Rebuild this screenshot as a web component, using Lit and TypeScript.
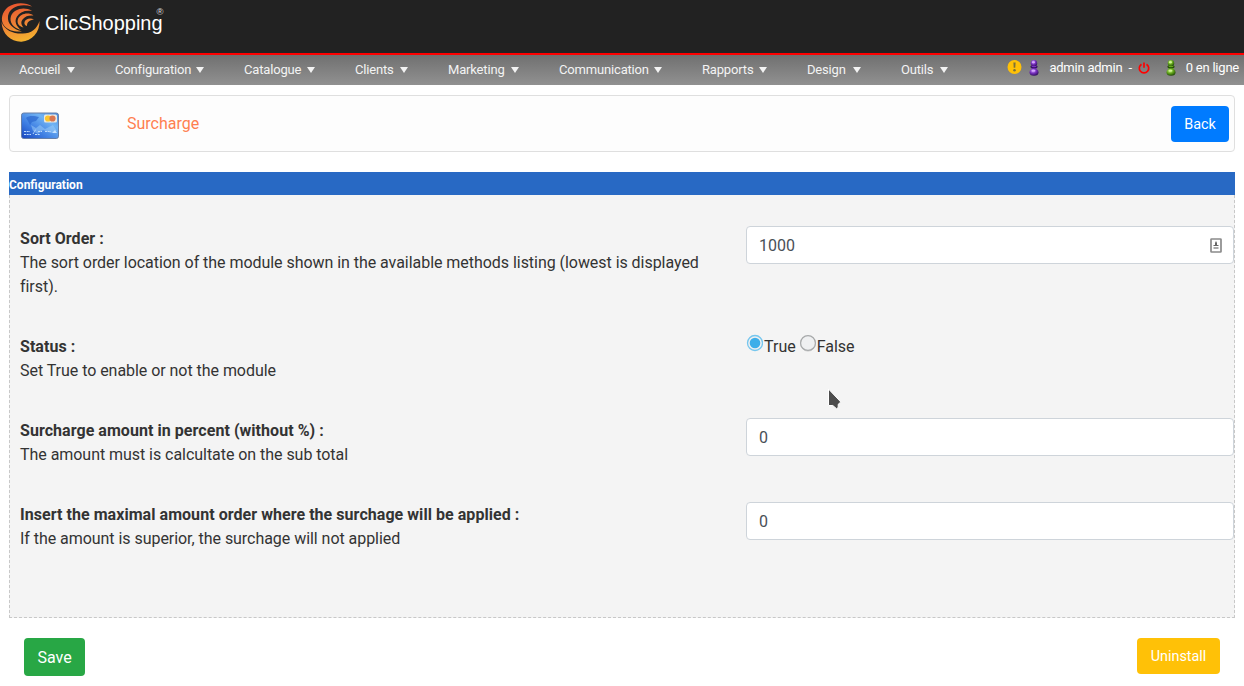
import { LitElement, html, css, svg } from "lit";
import { customElement } from "lit/decorators.js";

const MENU = ["Accueil", "Configuration", "Catalogue", "Clients", "Marketing", "Communication", "Rapports", "Design", "Outils"];

const person = (id: string, light: string, mid: string, dark: string) => html`
  <svg class="person" width="10" height="16" viewBox="0 0 10 16">
    <defs><radialGradient id=${id} cx="40%" cy="30%" r="70%">
      ${svg`<stop offset="0" stop-color=${light} /><stop offset=".5" stop-color=${mid} /><stop offset="1" stop-color=${dark} />`}
    </radialGradient></defs>
    <path d="M2.500 5.500h5v5h-5z" fill=${mid} />
    <ellipse cx="5" cy="12.200" rx="4.500" ry="3.500" fill="url(#${id})" />
    <ellipse cx="5" cy="6.800" rx="3.600" ry="1.500" fill=${dark} />
    <circle cx="5" cy="3.300" r="3.200" fill="url(#${id})" />
    <ellipse cx="5" cy="6.500" rx="2.600" ry=".7" fill=${mid} />
    <ellipse cx="4.400" cy="2.300" rx="1.600" ry="1" fill=${light} />
    <ellipse cx="4.500" cy="10.700" rx="1.900" ry=".9" fill=${light} />
  </svg>`;

@customElement("app-root")
export class AppRoot extends LitElement {
  static styles = css`
    :host { display: block; height: 686px; overflow: hidden; background: #fff; color: #333; font: 16px/24px Roboto, sans-serif; }
    * { box-sizing: border-box; }
    .top { height: 53px; background: #222; display: flex; }
    .logo { display: block; }
    .nav { height: 32px; border-top: 2px solid #f00; background: linear-gradient(#707070, #919191); display: flex; justify-content: space-between; color: #fff; font-size: 13px; line-height: 30px; }
    .menu { display: grid; grid-template-columns: 96px 129px 111px 93px 111px 143px 105px 94px 87px; padding-left: 19px; letter-spacing: -.17px; }
    .item { display: flex; align-items: center; justify-content: space-between; margin-right: 40px; white-space: nowrap; color: #f3f3f3; height: 29px; }
    .status { display: flex; height: 25px; align-items: center; padding-right: 5px; white-space: nowrap; letter-spacing: -.23px; }
    .person { margin-left: 7px; }
    .name { margin-left: 10px; }
    .dash { margin: 0 6px; }
    .online { margin-left: 10px; }
    .green { margin-left: 9px; display: flex; }
    .head { margin: 10px 9px 0; height: 57px; border: 1px solid #dfdfdf; border-radius: 4px; background: #fdfdfd; display: flex; align-items: flex-start; padding: 10px 5px 0 11px; }
    .card { margin-top: 6px; }
    .title { margin: 6px auto 0 68px; color: #ff7f50; }
    .btn { border: 0; border-radius: 4px; color: #fff; font: 16px/24px Roboto, sans-serif; padding: 2px 0 0; }
    .back { background: #007bff; width: 58px; height: 36px; font-size: 14.4px; }
    .bar { margin: 20px 9px 0; height: 23px; background: #2869c4; color: #fff; font-size: 12px; font-weight: 700; line-height: 26px; }
    .panel { margin: 0 9px; height: 423px; border: 1px dashed #c8c8c8; border-top: 0; background: #f4f4f4; padding: 31px 0 0 10px; display: grid; grid-template-columns: 726px 488px; grid-template-rows: 108px 84px 84px 84px; }
    .desc { padding: 1px 24px 0 0; letter-spacing: -.045px; }
    .desc b { display: block; font-weight: 700; letter-spacing: .05px; }
    .field { height: 38px; background: #fff; border: 1px solid #ced4da; border-radius: 4px; padding: 1px 11px 0 12px; display: flex; align-items: center; justify-content: space-between; color: #495057; }
    .radios { display: flex; align-items: flex-start; }
    .radio { margin: 0 1px 0 0; }
    .radio + span { margin-right: 3px; padding-top: 1px; }
    .actions { display: flex; justify-content: space-between; align-items: flex-start; padding: 20px 24px 0; }
    .save { background: #28a745; width: 61px; height: 38px; }
    .remove { background: #ffc107; width: 83px; height: 36px; font-size: 14.4px; }
    .pointer { position: absolute; left: 826px; top: 387px; }
  `;

  private row(title: string, text: string, control: unknown) {
    return html`<div class="desc"><b>${title}</b>${text}</div><div>${control}</div>`;
  }

  render() {
    return html`
      <header class="top">
        <svg class="logo" width="180" height="53" viewBox="0 0 180 53">
          <defs><linearGradient id="flame" gradientUnits="userSpaceOnUse" x1="14" y1="3" x2="24" y2="42">
            <stop offset="0" stop-color="#e9552f" /><stop offset=".5" stop-color="#ee8035" /><stop offset="1" stop-color="#f4b52f" />
          </linearGradient></defs>
          <g fill="url(#flame)">
            <path d="M1.500 22C2 34 11 42 21.500 41.700 32 41 40 32 39.500 21 37 29 31 33.500 23 33.500 14 34 5 31 1.500 22Z" />
            <path d="M32 6.500C26 2 15 2 8 7 2 12 0 20 4 25.500 8 30.500 14 32 22 31.500 13 29 7 24 8 16 9.500 8 19 3 32 6.500Z" />
            <path d="M32 11C24 6 14 9 11 16c-2 6 2 12 10 14-5-4-7-9-4-13.500C20 12 25 10 32 11Z" />
            <path d="M33.500 15.500C28 11.500 20 14 18 19c-1.500 4 1 7.500 5.500 8.500-2.500-3-3-6-.5-8.500 2.500-3 6-4 10.500-3.500Z" />
            <path d="M34 19.500c-4-2-8.500-.5-9.500 2.500-.5 2 .5 3.500 2.500 4 0-4 2.500-6 7-6.500Z" />
          </g>
          <text x="45" y="30" fill="#fff" font-family="Liberation Sans, sans-serif" font-size="20" textLength="117.500" lengthAdjust="spacingAndGlyphs">ClicShopping</text>
          <text x="156.500" y="15" fill="#ddd" font-family="Liberation Sans, sans-serif" font-size="9.500">®</text>
        </svg>
      </header>
      <nav class="nav">
        <div class="menu">${MENU.map((m) => html`<span class="item">${m}<svg width="8" height="6"><path d="M0 0h8L4 6z" fill="#f3f3f3" /></svg></span>`)}</div>
        <div class="status">
          <svg width="15" height="15" viewBox="0 0 15 15"><circle cx="7.500" cy="7" r="7" fill="#ffc107" /><path d="M6.400 2.500h2.200l-.3 5.300H6.700z" fill="#7b7038" /><circle cx="7.500" cy="10.200" r="1.250" fill="#7b7038" /></svg>
          ${person("violet", "#d5a5ff", "#7931c0", "#351063")}
          <span class="name">admin admin</span><span class="dash">-</span>
          <svg width="12" height="12" viewBox="0 0 12 12"><path d="M3.500 2.200a4.700 4.700 0 1 0 5 0M6 .5v5.300" fill="none" stroke="#f00" stroke-width="1.700" /></svg>
          <span class="green">${person("lime", "#d0f592", "#65a91c", "#234d08")}</span>
          <span class="online">0 en ligne</span>
        </div>
      </nav>
      <section class="head">
        <svg class="card" width="38" height="27" viewBox="0 0 38 27">
          <defs><linearGradient id="blue" x1="0" y1="1" x2="1" y2="0">
            <stop offset="0" stop-color="#1744bd" /><stop offset=".35" stop-color="#3d7de2" /><stop offset=".7" stop-color="#70b3f4" /><stop offset="1" stop-color="#4488df" />
          </linearGradient></defs>
          <rect x=".5" y="1" width="37" height="25.500" rx="2.200" fill="url(#blue)" stroke="#667fa7" />
          <path d="M5 6c3-3 9-2 13-1l-3 4-4 1-2 3-2-4z" fill="#2b67cf" opacity=".7" />
          <path d="M10 13l5 3 4-3 5 4 8-4 4 6-6 2-8-3-5 4-5-3z" fill="#a0cff9" opacity=".5" />
          <rect x="23" y="2.500" width="13" height="8" rx="1.500" fill="#ece8df" />
          <circle cx="27" cy="6.500" r="3.100" fill="#fbc52e" /><circle cx="31.500" cy="6.500" r="3.100" fill="#d97650" />
          <path d="M3 19.500h6M12 22l3-5M17 19.500h4M24 19.500h6M3 22.500h7M14 22.500h5" stroke="#bcd9fb" stroke-width="1" stroke-dasharray="2 .7" />
          <path d="M31 21l3-3 2 3z" fill="#c4e2ff" />
        </svg>
        <span class="title">Surcharge</span>
        <button class="btn back">Back</button>
      </section>
      <div class="bar">Configuration</div>
      <main class="panel">
        ${this.row("Sort Order :", "The sort order location of the module shown in the available methods listing (lowest is displayed first).", html`
          <div class="field"><span>1000</span><svg width="12" height="16" viewBox="0 0 12 16"><rect x="1" y="1" width="10" height="13" rx=".5" fill="#fff" stroke="#8b8b8b" stroke-width="1.700" /><path d="M6 3l1 2v2h1.500v1h-5V7H5V5z" fill="#666" /><path d="M3.500 9h5v2h-5z" fill="#aaa" /></svg></div>`)}
        ${this.row("Status :", "Set True to enable or not the module", html`
          <div class="radios">
            <svg class="radio" width="17" height="18" viewBox="0 0 17 18"><circle cx="9" cy="9" r="7.500" fill="#eff0f1" stroke="#75c6ee" stroke-width="1.300" /><circle cx="9" cy="9" r="5.300" fill="#3daee9" /></svg><span>True</span>
            <svg class="radio" width="17" height="18" viewBox="0 0 17 18"><circle cx="9" cy="9.600" r="7.500" fill="none" stroke="#ccc" /><circle cx="9" cy="9" r="7.400" fill="#eff0f1" stroke="#a7a9aa" stroke-width="1.200" /></svg><span>False</span>
          </div>`)}
        ${this.row("Surcharge amount in percent (without %) :", "The amount must is calcultate on the sub total", html`<div class="field">0</div>`)}
        ${this.row("Insert the maximal amount order where the surchage will be applied :", "If the amount is superior, the surchage will not applied", html`<div class="field">0</div>`)}
      </main>
      <footer class="actions"><button class="btn save">Save</button><button class="btn remove">Uninstall</button></footer>
      <svg class="pointer" width="18" height="24" viewBox="0 0 18 24"><path d="M2.500 2v16.500h4.300l3.700 3.200 1.700-1.200v-3.200l2.600-2.300z" fill="#4d4d4d" stroke="#fff" stroke-width="1" /></svg>
    `;
  }
}
